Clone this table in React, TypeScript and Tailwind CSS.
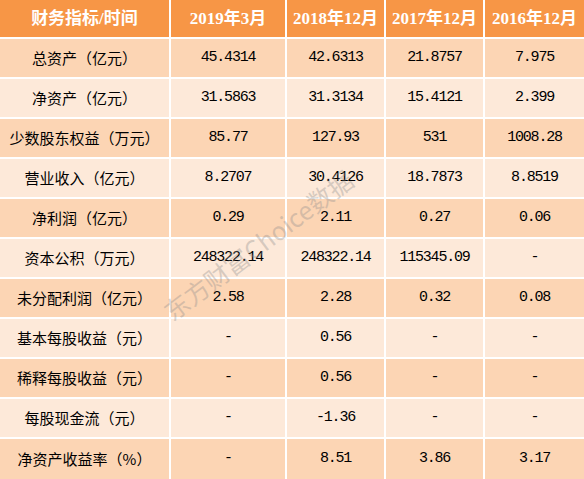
import React from 'react';

const headers = ['财务指标/时间', '2019年3月', '2018年12月', '2017年12月', '2016年12月'];

const rows: string[][] = [
  ['总资产（亿元）', '45.4314', '42.6313', '21.8757', '7.975'],
  ['净资产（亿元）', '31.5863', '31.3134', '15.4121', '2.399'],
  ['少数股东权益（万元）', '85.77', '127.93', '531', '1008.28'],
  ['营业收入（亿元）', '8.2707', '30.4126', '18.7873', '8.8519'],
  ['净利润（亿元）', '0.29', '2.11', '0.27', '0.06'],
  ['资本公积（万元）', '248322.14', '248322.14', '115345.09', '-'],
  ['未分配利润（亿元）', '2.58', '2.28', '0.32', '0.08'],
  ['基本每股收益（元）', '-', '0.56', '-', '-'],
  ['稀释每股收益（元）', '-', '0.56', '-', '-'],
  ['每股现金流（元）', '-', '-1.36', '-', '-'],
  ['净资产收益率（%）', '-', '8.51', '3.86', '3.17'],
];

export default function App() {
  return (
    <div className="relative w-[584px] h-[479px] overflow-hidden bg-white">
      <div className="grid grid-cols-[169px_114px_97px_97px_1fr] grid-rows-[37px_repeat(10,38px)_1fr] gap-[2px] h-full bg-white">
        {headers.map((h) => (
          <div
            key={h}
            className="flex items-center justify-center bg-[#f79646] text-white font-bold text-[17px] font-['Liberation_Serif','Noto_Sans_CJK_SC',serif]"
          >
            {h}
          </div>
        ))}
        {rows.map((row, i) => {
          const bg = i % 2 === 0 ? 'bg-[#fcd5b4]' : 'bg-[#fde9d9]';
          return row.map((cell, j) => (
            <div
              key={`${i}-${j}`}
              className={`flex items-center justify-center text-black ${bg} ${
                j === 0
                  ? "text-[15px] font-['Noto_Sans_CJK_SC',sans-serif]"
                  : "text-[15px] tracking-[-1.2px] font-['Liberation_Mono','Noto_Sans_CJK_SC',monospace]"
              }`}
            >
              {cell}
            </div>
          ));
        })}
      </div>

      {/* watermark */}
      <div className="pointer-events-none absolute left-[258px] top-[245px] -translate-x-1/2 -translate-y-1/2 -rotate-[37deg] whitespace-nowrap text-[25px] text-[#8c8c8c]/35 font-['Noto_Sans_CJK_SC',sans-serif]">
        东方财富Choice数据
      </div>
    </div>
  );
}
